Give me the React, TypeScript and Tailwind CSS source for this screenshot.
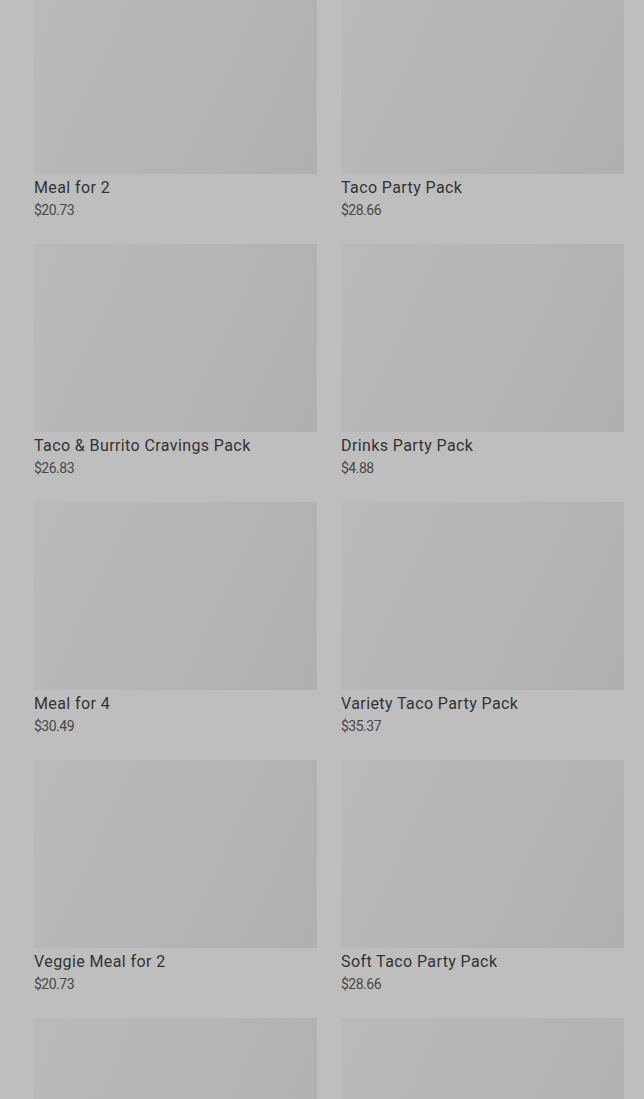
const products = [
  { name: "Meal for 2", price: "$20.73" },
  { name: "Taco Party Pack", price: "$28.66" },
  { name: "Taco & Burrito Cravings Pack", price: "$26.83" },
  { name: "Drinks Party Pack", price: "$4.88" },
  { name: "Meal for 4", price: "$30.49" },
  { name: "Variety Taco Party Pack", price: "$35.37" },
  { name: "Veggie Meal for 2", price: "$20.73" },
  { name: "Soft Taco Party Pack", price: "$28.66" },
  { name: "", price: "" },
  { name: "", price: "" },
];

const ProductCard = ({ name, price }: { name: string; price: string }) => (
  <div className="flex flex-col">
    <div className="h-[188px] w-full bg-[linear-gradient(115deg,#bababa,#b6b6b6_45%,#b0b0b0)]" />
    {name && (
      <>
        <p className="mt-0.5 text-base leading-6 font-normal tracking-[0.4px] text-[#333333]">
          {name}
        </p>
        <p className="text-sm leading-5 tracking-[-0.5px] text-[#484848]">{price}</p>
      </>
    )}
  </div>
);

export default function App() {
  return (
    <div
      className="h-screen overflow-hidden bg-[#bebebe] pl-[34px] pr-[20px]"
      style={{ fontFamily: "Roboto, 'Liberation Sans', sans-serif" }}
    >
      <div className="-mt-[14px] grid grid-cols-2 gap-x-6 gap-y-6 pb-6">
        {products.map((p, i) => (
          <ProductCard key={i} name={p.name} price={p.price} />
        ))}
      </div>
    </div>
  );
}
